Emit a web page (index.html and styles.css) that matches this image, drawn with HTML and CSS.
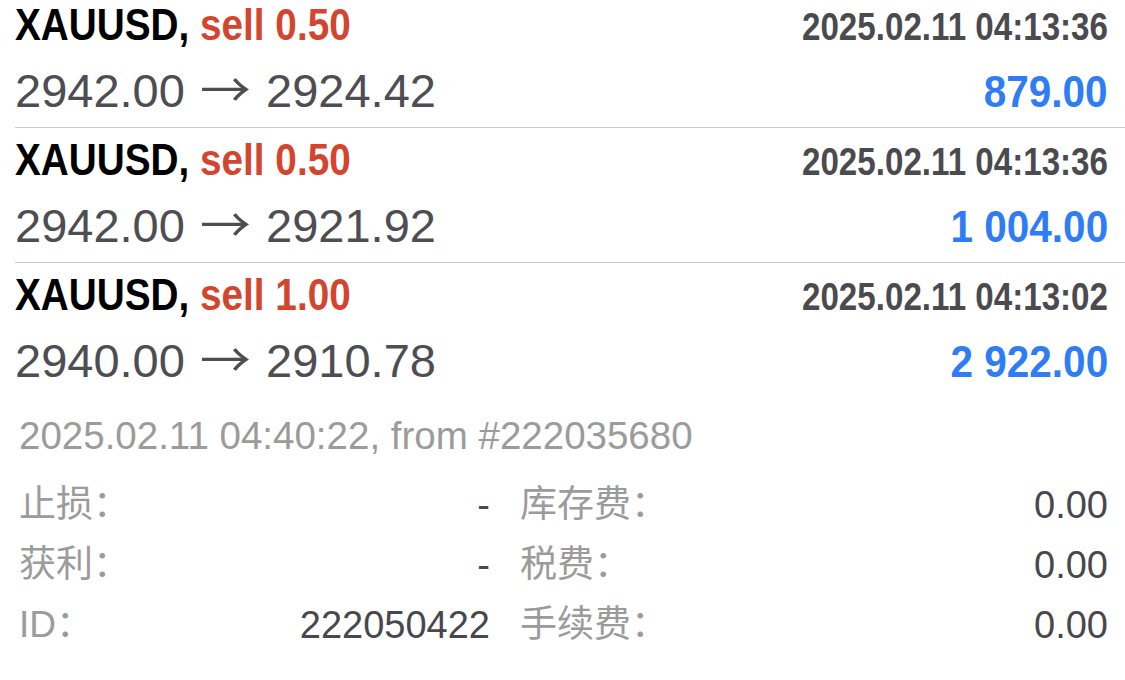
FILE: index.html
```html
<!DOCTYPE html>
<html lang="zh-CN">

<head>
  <meta charset="UTF-8">
  <meta name="viewport" content="width=device-width, initial-scale=1.0">
  <title>XAUUSD deals</title>

  <link rel="stylesheet" href="styles.css">
</head>

<body>
  <main>
    <ul class="trade-list">
      <li class="trade">
        <div class="trade-head">
          <span class="symbol">XAUUSD, <span class="side">sell 0.50</span></span>
          <span class="time">2025.02.11 04:13:36</span>
        </div>
        <div class="trade-prices">
          <span class="prices">2942.00 <span class="arrow">→</span> 2924.42</span>
          <span class="profit">879.00</span>
        </div>
      </li>
      <li class="trade">
        <div class="trade-head">
          <span class="symbol">XAUUSD, <span class="side">sell 0.50</span></span>
          <span class="time">2025.02.11 04:13:36</span>
        </div>
        <div class="trade-prices">
          <span class="prices">2942.00 <span class="arrow">→</span> 2921.92</span>
          <span class="profit">1 004.00</span>
        </div>
      </li>
      <li class="trade">
        <div class="trade-head">
          <span class="symbol">XAUUSD, <span class="side">sell 1.00</span></span>
          <span class="time">2025.02.11 04:13:02</span>
        </div>
        <div class="trade-prices">
          <span class="prices">2940.00 <span class="arrow">→</span> 2910.78</span>
          <span class="profit">2 922.00</span>
        </div>
      </li>
    </ul>

    <section class="details">
      <p class="closed">2025.02.11 04:40:22, from #222035680</p>
      <dl class="info">
        <dt>止损：</dt><dd>-</dd>
        <dt class="second">库存费：</dt><dd>0.00</dd>

        <dt>获利：</dt><dd>-</dd>
        <dt class="second">税费：</dt><dd>0.00</dd>

        <dt>ID：</dt><dd>222050422</dd>
        <dt class="second">手续费：</dt><dd>0.00</dd>
      </dl>
    </section>
  </main>
</body>

</html>
```

FILE: styles.css
```css
body {
  margin: 0;
  background-color: #ffffff;
  font-family: "Liberation Sans", "Noto Sans CJK SC", sans-serif;
  overflow: hidden;
}

.trade-list {
  list-style: none;
  margin: -7px 0 0 15px;
  padding: 0;
}

.trade {
  height: 135px;
  box-sizing: border-box;
  padding: 10px 17px 0 0;
  border-bottom: 1px solid #c8c7cc;
}

.trade:last-child {
  border-bottom: none;
}

.trade-head,
.trade-prices {
  display: flex;
  justify-content: space-between;
  align-items: baseline;
  white-space: nowrap;
}

.trade-head {
  height: 60px;
}

.symbol {
  display: inline-block;
  font-size: 44px;
  font-weight: bold;
  line-height: 1;
  color: #000000;
  transform: scaleX(0.88);
  transform-origin: left;
}

.side {
  color: #d4452f;
}

.time {
  display: inline-block;
  font-size: 39px;
  font-weight: bold;
  line-height: 1;
  color: #4a4a4f;
  transform: scaleX(0.85);
  transform-origin: right;
}

.prices {
  font-size: 47px;
  line-height: 1;
  color: #4d4d52;
}

.arrow {
  display: inline-block;
  margin: 0 4px;
  font-family: "Noto Sans CJK SC", sans-serif;
  transform: scaleX(1.08);
}

.profit {
  display: inline-block;
  font-size: 45px;
  font-weight: bold;
  line-height: 1;
  color: #2f7df6;
  transform: scaleX(0.9);
  transform-origin: right;
}

.details {
  padding: 19px 17px 0 19px;
}

.closed {
  margin: 0;
  font-size: 38.5px;
  line-height: 1;
  color: #9b9b9b;
}

.info {
  display: grid;
  grid-template-columns: 150px 321px 210px 408px;
  grid-auto-rows: 60px;
  margin: 19px 0 0 0;
  line-height: 60px;
  white-space: nowrap;
}

.info dt {
  font-size: 37px;
  color: #9b9b9b;
}

.info dt.second {
  padding-left: 30px;
}

.info dd {
  margin: 0;
  font-size: 38px;
  color: #47474c;
  text-align: right;
}
```
